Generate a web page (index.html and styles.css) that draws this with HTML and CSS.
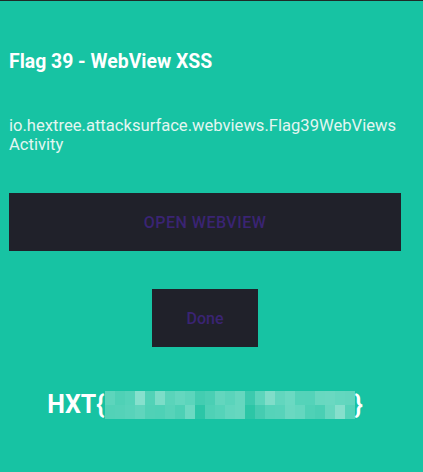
FILE: index.html
```html
<!DOCTYPE html>
<html>
<head>
<meta charset="utf-8">
<link rel="stylesheet" href="styles.css">
</head>
<body>
<div class="screen">
  <div class="content">
    <h1 class="title">Flag 39 - WebView XSS</h1>
    <p class="activity">io.hextree.attacksurface.webviews.Flag39WebViews<wbr>Activity</p>
    <div class="btn btn-wide">OPEN WEBVIEW</div>
    <div class="done-row"><div class="btn btn-done">Done</div></div>
    <div class="flag">
      <span class="flag-text">HXT{</span>
      <span class="pix">
        <i style="background:#5dd5bc"></i><i style="background:#4fd1b6"></i><i style="background:#55d3b9"></i><i style="background:#86e0cd"></i><i style="background:#52d2b7"></i><i style="background:#7cddc8"></i><i style="background:#5ad4ba"></i><i style="background:#64d7bf"></i><i style="background:#5cd5bc"></i><i style="background:#43cdb1"></i><i style="background:#4acfb4"></i><i style="background:#63d6be"></i><i style="background:#5ad4bb"></i><i style="background:#66d7bf"></i><i style="background:#3ccaae"></i><i style="background:#5dd5bc"></i><i style="background:#80ddc9"></i><i style="background:#62d6be"></i><i style="background:#6bd9c2"></i><i style="background:#55d3b9"></i><i style="background:#54d3b9"></i><i style="background:#68d8c0"></i><i style="background:#6ad8c1"></i><i style="background:#64d7bf"></i><i style="background:#62d6be"></i>
        <i style="background:#52d2b7"></i><i style="background:#54d2b8"></i><i style="background:#58d3ba"></i><i style="background:#60d5bd"></i><i style="background:#50d1b6"></i><i style="background:#4ed1b6"></i><i style="background:#57d3b9"></i><i style="background:#4dd0b5"></i><i style="background:#6cd9c2"></i><i style="background:#2cc6a7"></i><i style="background:#4fd1b6"></i><i style="background:#55d3b9"></i><i style="background:#62d6be"></i><i style="background:#66d7bf"></i><i style="background:#2cc6a6"></i><i style="background:#45ccb1"></i><i style="background:#55d3b9"></i><i style="background:#57d3ba"></i><i style="background:#6ad8c1"></i><i style="background:#64d7bf"></i><i style="background:#4fd1b6"></i><i style="background:#4acfb4"></i><i style="background:#66d7bf"></i><i style="background:#86dfcc"></i><i style="background:#55d3b9"></i>
      </span>
      <span class="flag-text">}</span>
    </div>
  </div>
</div>
</body>
</html>
```
FILE: styles.css
```css
html, body {
  margin: 0;
  padding: 0;
}
body {
  width: 423px;
  height: 472px;
  background: #17c3a3;
  font-family: Roboto, "Liberation Sans", sans-serif;
  overflow: hidden;
}
.screen {
  border-top: 1px solid #1f2a28;
  height: 471px;
}
.content {
  width: 392px;
  margin-left: 9px;
  display: flex;
  flex-direction: column;
}
.title {
  margin: 49px 0 0 0;
  font-size: 19.4px;
  font-weight: 700;
  color: #ffffff;
  line-height: 24px;
}
.activity {
  margin: 42px 0 0 0;
  font-size: 16.6px;
  line-height: 19px;
  color: #e3f6f1;
}
.btn {
  background: #20212a;
  color: #3a2473;
  font-size: 16px;
  font-weight: 500;
  display: flex;
  align-items: center;
  justify-content: center;
}
.btn-wide {
  margin-top: 39px;
  height: 58px;
  letter-spacing: 0.5px;
  text-transform: uppercase;
}
.done-row {
  display: flex;
  justify-content: center;
  margin-top: 38px;
}
.btn-done {
  width: 106px;
  height: 58px;
}
.flag {
  margin-top: 43px;
  display: flex;
  justify-content: center;
  align-items: center;
}
.flag-text {
  font-size: 25px;
  font-weight: 700;
  color: #ffffff;
  line-height: 30px;
}
.pix {
  display: grid;
  grid-template-columns: repeat(25, 10px);
  grid-template-rows: 14px 14px;
}
.pix i {
  display: block;
}
```
